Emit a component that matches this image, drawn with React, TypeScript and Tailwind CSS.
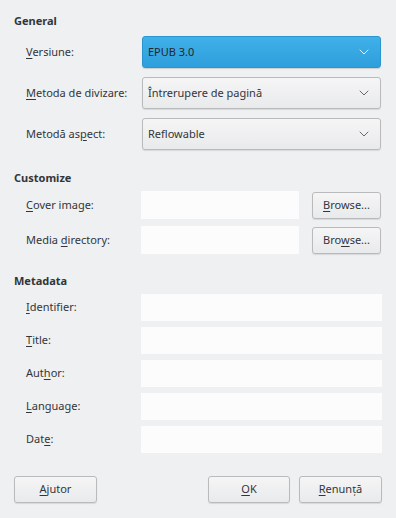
import { ChevronDown } from "lucide-react";

function U({ children }: { children: string }) {
  return <span className="underline decoration-1 underline-offset-2">{children}</span>;
}

function Combo({ value, active }: { value: string; active?: boolean }) {
  return (
    <div
      className={
        active
          ? "flex h-8 w-[239px] items-center justify-between rounded-[3px] border border-[#2c95cf] bg-gradient-to-b from-[#40b0ea] to-[#2e9fdb] pl-[5px] pr-2 text-[#232629] shadow-[0_1px_1px_rgba(0,0,0,0.15)]"
          : "flex h-8 w-[239px] items-center justify-between rounded-[3px] border border-[#b9babb] bg-gradient-to-b from-[#f5f5f6] to-[#e9eaeb] pl-[5px] pr-2 text-[#31363b] shadow-[0_1px_1px_rgba(0,0,0,0.1)]"
      }
    >
      <span>{value}</span>
      <ChevronDown className={active ? "h-4 w-4 text-white" : "h-4 w-4 text-[#4d4d4d]"} strokeWidth={1.25} />
    </div>
  );
}

function Button({ children, className = "" }: { children: React.ReactNode; className?: string }) {
  return (
    <div
      className={
        "flex h-[27px] items-center justify-center rounded-[3px] border border-[#b9babb] bg-gradient-to-b from-[#f5f5f6] to-[#e9eaeb] text-[#31363b] shadow-[0_1px_1px_rgba(0,0,0,0.1)] " +
        className
      }
    >
      {children}
    </div>
  );
}

function Field({ className = "" }: { className?: string }) {
  return <div className={"h-[27px] bg-[#fcfcfc] " + className} />;
}

export default function App() {
  return (
    <div className="h-[518px] w-[396px] bg-[#eff0f1] text-[11px] text-[#31363b] [font-family:'Noto_Sans',sans-serif]">
      <div className="px-[14px] pt-[14px]">
        <div className="font-bold leading-[14px]">General</div>
        <div className="mt-[8px] flex flex-col gap-[9px] pl-3">
          <div className="flex items-center">
            <span className="w-[116px]"><U>V</U>ersiune:</span>
            <Combo value="EPUB 3.0" active />
          </div>
          <div className="flex items-center">
            <span className="w-[116px]"><U>M</U>etoda de divizare:</span>
            <Combo value="Întrerupere de pagină" />
          </div>
          <div className="flex items-center">
            <span className="w-[116px]">Metodă as<U>p</U>ect:</span>
            <Combo value="Reflowable" />
          </div>
        </div>

        <div className="mt-[21px] font-bold leading-[14px]">Customize</div>
        <div className="mt-[6px] flex flex-col gap-[7px] pl-3">
          <div className="flex items-center">
            <span className="w-[115px]"><U>C</U>over image:</span>
            <Field className="h-[28px] w-[158px]" />
            <Button className="ml-[13px] w-[69px]"><span><U>B</U>rowse...</span></Button>
          </div>
          <div className="flex items-center">
            <span className="w-[115px]">Media <U>d</U>irectory:</span>
            <Field className="h-[28px] w-[158px]" />
            <Button className="ml-[13px] w-[69px]"><span>Bro<U>w</U>se...</span></Button>
          </div>
        </div>

        <div className="mt-[20px] font-bold leading-[14px]">Metadata</div>
        <div className="mt-[6px] flex flex-col gap-[6px] pl-3">
          {[
            ["", "I", "dentifier:"],
            ["", "T", "itle:"],
            ["Aut", "h", "or:"],
            ["", "L", "anguage:"],
            ["Dat", "e", ":"],
          ].map(([a, u, b]) => (
            <div key={u + b} className="flex items-center">
              <span className="w-[115px]">
                {a}
                <U>{u}</U>
                {b}
              </span>
              <Field className="w-[241px]" />
            </div>
          ))}
        </div>

        <div className="mt-[23px] flex items-center">
          <Button className="w-[83px]"><span><U>A</U>jutor</span></Button>
          <div className="flex-1" />
          <Button className="w-[82px]"><span><U>O</U>K</span></Button>
          <Button className="ml-[9px] w-[83px]"><span><U>R</U>enunță</span></Button>
        </div>
      </div>
    </div>
  );
}
